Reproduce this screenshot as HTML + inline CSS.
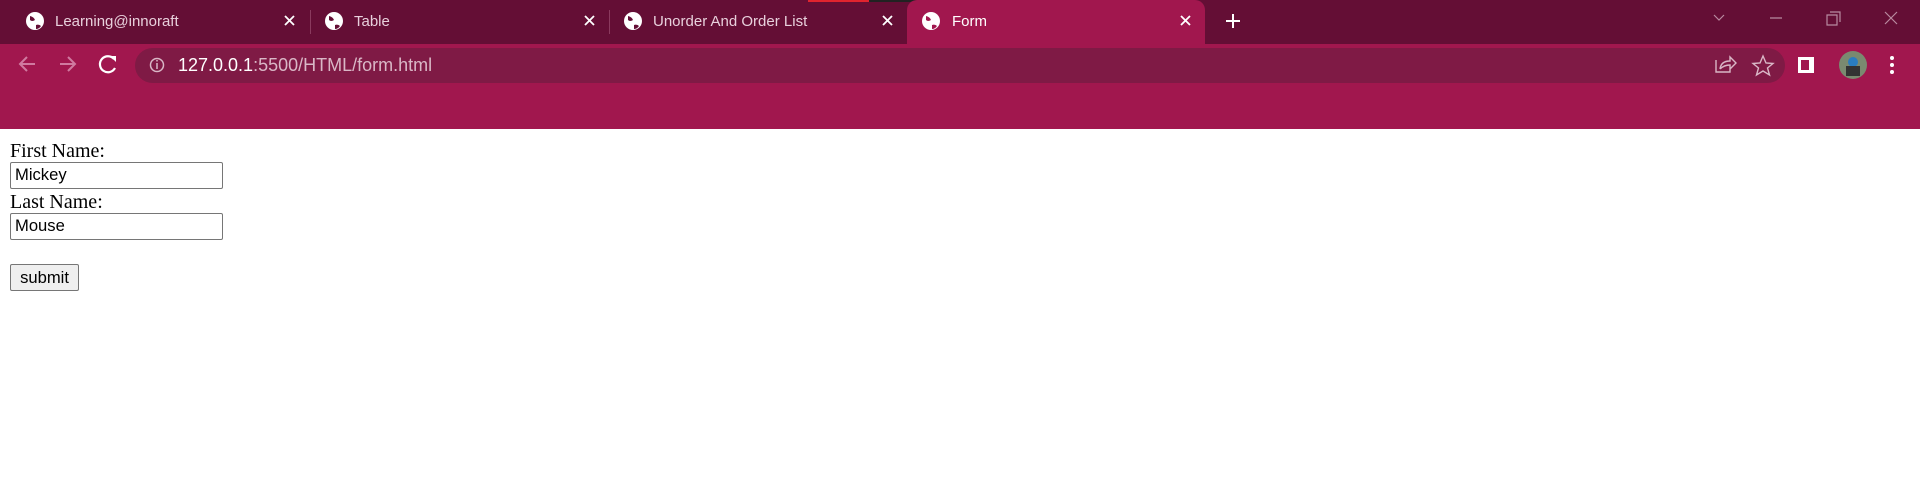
<!DOCTYPE html>
<html><head><style>
*{box-sizing:border-box}
body{margin:0;width:1920px;height:477px;overflow:hidden;background:#fff;position:relative;font-family:"Liberation Sans",sans-serif}
.tabbar{position:absolute;left:0;top:0;width:1920px;height:44px;background:#640e35}
.tb{position:absolute;left:0;top:44px;width:1920px;height:85px;background:#a1174e}
.tab{position:absolute;top:0;height:44px;color:#e8d0dc;font-size:15px;white-space:nowrap}
.tab .t{position:absolute;top:13px;white-space:nowrap}
.sep{position:absolute;top:10px;width:1px;height:24px;background:#8a3a5e}
.act{position:absolute;left:907px;top:0;width:298px;height:46px;background:#a1174e;border-radius:10px 10px 0 0}
.addr{position:absolute;left:135px;top:48px;width:1650px;height:35px;border-radius:18px;background:#7f1a45}
.url{position:absolute;left:178px;top:55px;font-size:18px;color:#fff;white-space:nowrap}
.url span{color:#d9b7c6}
.content{position:absolute;left:10px;top:140px;font-family:"Liberation Serif",serif;font-size:20px;color:#000}
.inp{display:block;width:213px;height:27px;border:1px solid #767676;border-radius:2px;font-family:"Liberation Sans",sans-serif;font-size:16.6px;padding:2px 4px;margin:0}
.btn{position:absolute;left:10px;top:264px;width:69px;height:27px;border:1px solid #767676;border-radius:2px;background:#efefef;font-family:"Liberation Sans",sans-serif;font-size:16.6px;text-align:center;line-height:25px}
svg{position:absolute}
</style></head><body>
<div class="tabbar"></div>
<div style="position:absolute;left:808px;top:0;width:61px;height:2px;background:#e0242e"></div>
<div style="position:absolute;left:869px;top:0;width:241px;height:2px;background:#222"></div>
<div class="tb"></div>
<div class="act"></div>
<svg width="1920" height="44" style="left:0;top:0">
<g fill="#fff"><circle cx="35" cy="21" r="9"/><circle cx="334" cy="21" r="9"/><circle cx="633" cy="21" r="9"/><circle cx="931" cy="21" r="9"/></g>
<g fill="#640e35"><path d="M30 16 q4 1 5 4 q-3 2 -5 0z M36 25 q3-1 5 1 q-2 3 -5 3z"/><path d="M329 16 q4 1 5 4 q-3 2 -5 0z M335 25 q3-1 5 1 q-2 3 -5 3z"/><path d="M628 16 q4 1 5 4 q-3 2 -5 0z M634 25 q3-1 5 1 q-2 3 -5 3z"/></g>
<path fill="#a1174e" d="M926 16 q4 1 5 4 q-3 2 -5 0z M932 25 q3-1 5 1 q-2 3 -5 3z"/>
<g stroke="#fff" stroke-width="1.8"><path d="M285 16l9 9M294 16l-9 9M585 16l9 9M594 16l-9 9M883 16l9 9M892 16l-9 9M1181 16l9 9M1190 16l-9 9"/><path d="M1233 14v14M1226 21h14" stroke-width="2"/></g>
<g stroke="#b88aa0" stroke-width="1.2" fill="none"><path d="M1714 15l5 5 5-5M1770 18h12M1827 15h10v10h-10zM1830 12h10v10M1885 12l12 12M1897 12l-12 12"/></g>
</svg>
<div class="sep" style="left:310px"></div><div class="sep" style="left:609px"></div>
<div class="tab" style="left:55px"><span class="t">Learning@innoraft</span></div>
<div class="tab" style="left:354px"><span class="t">Table</span></div>
<div class="tab" style="left:653px"><span class="t">Unorder And Order List</span></div>
<div class="tab" style="left:952px;color:#fff"><span class="t">Form</span></div>
<div class="addr"></div>
<div class="url">127.0.0.1<span>:5500/HTML/form.html</span></div>
<svg width="1920" height="85" style="left:0;top:44px">
<g stroke="#d07aa0" stroke-width="2" fill="none"><path d="M20 20h15M27 13l-7 7 7 7M60 20h15M68 13l7 7-7 7"/></g>
<path d="M114 15a8 8 0 1 0 1 9" stroke="#fff" stroke-width="2.2" fill="none"/><path d="M110 12h6v6z" fill="#fff"/>
<circle cx="157" cy="21" r="6.5" stroke="#d9b7c6" stroke-width="1.5" fill="none"/><path d="M157 19v6M157 16v1.5" stroke="#d9b7c6" stroke-width="1.5"/>
<g stroke="#d9b7c6" stroke-width="1.4" fill="none"><path d="M1716 16v12h14v-4M1720 25q1-8 10-8v-4l6 6-6 6v-4q-6 0-10 4"/><path d="M1763 12l3 7 7 .5-5.5 4.5 2 7-6.5-4-6.5 4 2-7-5.5-4.5 7-.5z"/></g>
<rect x="1798" y="13" width="16" height="16" fill="#fff"/><rect x="1801" y="16" width="8" height="10" fill="#a1174e"/>
<circle cx="1853" cy="21" r="14" fill="#7a8a70"/><circle cx="1853" cy="18" r="5" fill="#2a7dc0"/><rect x="1846" y="22" width="14" height="10" fill="#333"/>
<g fill="#fff"><circle cx="1892" cy="14" r="2"/><circle cx="1892" cy="21" r="2"/><circle cx="1892" cy="28" r="2"/></g>
</svg>
<div class="content">
<div style="height:22px;line-height:22px">First Name:</div>
<div class="inp">Mickey</div>
<div style="height:24px;line-height:26px">Last Name:</div>
<div class="inp">Mouse</div>
</div>
<div class="btn">submit</div>
</body></html>
